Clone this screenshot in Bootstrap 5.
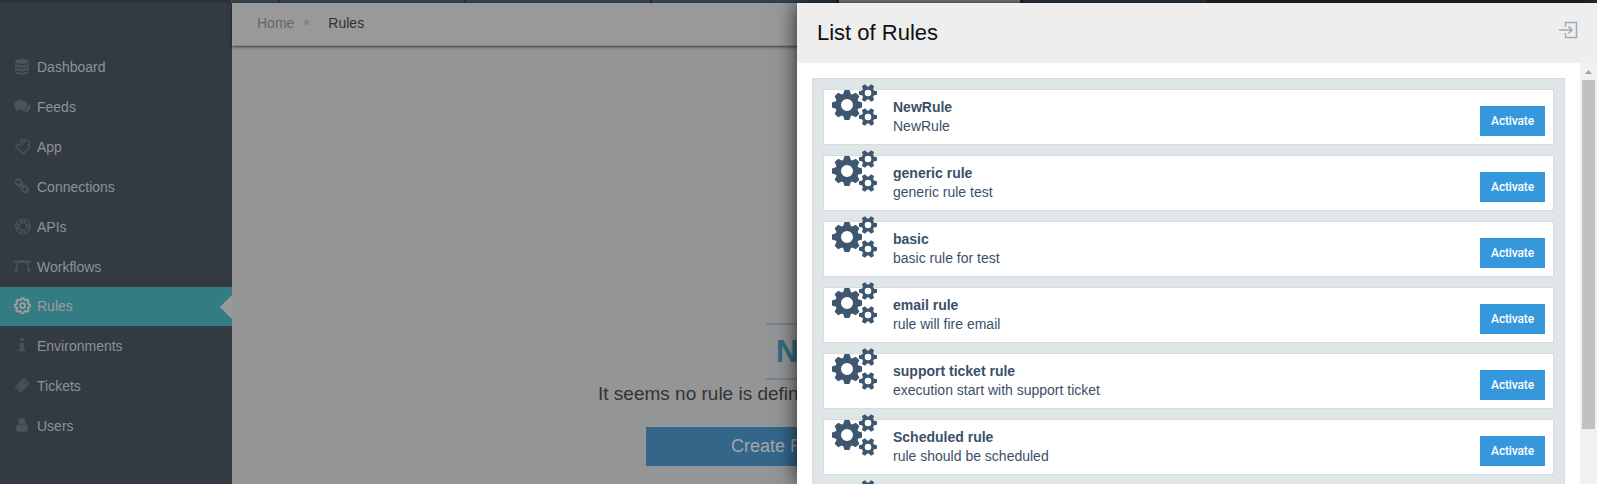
<!DOCTYPE html>
<html lang="en">
<head>
<meta charset="utf-8">
<title>Rules</title>
<link href="https://cdn.jsdelivr.net/npm/bootstrap@5.3.0/dist/css/bootstrap.min.css" rel="stylesheet">
<style>
html,body{height:100%;overflow:hidden}
body{font-family:"Liberation Sans",Arial,sans-serif;font-size:14px;line-height:20px;color:#3b5068}
.app-shell{height:484px;overflow:hidden;background:#949596}
.tab-strip{height:3px;background:#2c3037;padding-left:231px;gap:4px}
.tab-strip span{height:3px;width:182px;background:#34434f;border:solid #46535e;border-width:0 1px;flex:none}
.tab-strip span:first-child{width:46px}
.tab-strip .live{background:#999;border-color:#999;width:181px}
.side{width:232px;background:#343a42;padding-top:44px}
.side a{height:40px;padding:0 0 0 14px;color:#889499;text-decoration:none}
.side a svg{width:17px;height:17px;margin:-2px 6px 0 0;color:#4b525d;flex:none}
.side a.current{height:39px;padding-bottom:1px;background:#347c83;color:#9c9a9a;position:relative}
.side a.current svg{color:#a3a09f}
.side a.current::after{content:"";position:absolute;right:0;top:8px;border:12px solid transparent;border-left:0;border-right-color:#999}
.crumbs{height:43px;background:#999;border-bottom:1px solid #858585;box-shadow:0 1px 3px rgba(0,0,0,.6);padding:0 0 3px 25px;color:#666}
.crumbs i{width:5px;height:5px;border-radius:50%;background:#858585;margin:0 19px 0 10px}
.crumbs b{font-weight:400;color:#303030}
.empty-note{width:366px;margin:277px 0 0 366px}
.empty-note h1{font-size:31px;font-weight:700;line-height:53px;height:57px;margin:0 0 0 168px;border:solid #7a8389;border-width:2px 0;color:#356980;padding:0 10px;width:166px;white-space:nowrap}
.empty-note p{font-size:19px;line-height:24px;margin:2px 0 0;color:#333;white-space:nowrap}
.create-btn{width:266px;height:39px;background:#34668a;color:#a3a7aa;font-size:18px;border-radius:0;border:0;padding:0;margin:21px 0 0 48px}
.drawer{position:absolute;left:797px;top:3px;right:0;bottom:0;background:#fff;box-shadow:0 0 20px rgba(0,0,0,.78)}
.drawer-head{height:60px;background:#eee;padding:0 19px 1px 20px}
.drawer-head h2{font-size:22px;line-height:26px;margin:1px 0 0;color:#111;font-weight:400}
.drawer-head svg{width:19px;height:18px;margin-bottom:6px}
.rules-box{margin:15px 15px 0;border:1px solid #d9dcdc;background:#dee6e8;padding:10px 10px 0;height:440px}
.rule{height:56px;margin-bottom:10px;background:#fff;border:1px solid #d9dcdc;padding:0 8px}
.rule>svg{width:46px;height:42px;margin-top:-6px;flex:none;color:#3e576f}
.rule .txt{margin:8px 0 0 15px;line-height:19px}
.rule .btn{width:65px;height:30px;margin-top:16px;padding:0;background:#3598dc;color:#fff;border:0;border-radius:0;font:500 12px Roboto,sans-serif;letter-spacing:-.15px}
.scroller{width:17px;background:#f1f1f1;flex:none;padding:0 2px}
.scroller svg{width:13px;height:17px;display:block}
.scroller .thumb{height:349px;background:#c1c1c1}
</style>
</head>
<body>
<svg width="0" height="0" class="position-absolute">
<defs>
<path id="tooth" d="M-4-10.500-2.500-15h5L4-10.500z"/>
<g id="teeth4"><use href="#tooth"/><use href="#tooth" transform="rotate(90)"/><use href="#tooth" transform="rotate(180)"/><use href="#tooth" transform="rotate(270)"/></g>
<path id="nub" d="M-2.600-5.500-1.800-9h3.600L2.600-5.500z"/>
<g id="small-cog"><circle r="4.900" fill="none" stroke="currentColor" stroke-width="3.200"/><use href="#nub" transform="rotate(30)"/><use href="#nub" transform="rotate(90)"/><use href="#nub" transform="rotate(150)"/><use href="#nub" transform="rotate(210)"/><use href="#nub" transform="rotate(270)"/><use href="#nub" transform="rotate(330)"/></g>
</defs>
<symbol id="cogs" viewBox="0 0 46 42">
<g fill="currentColor"><g transform="translate(15 21)"><circle r="8.800" fill="none" stroke="currentColor" stroke-width="5.600"/><use href="#teeth4"/><use href="#teeth4" transform="rotate(45)"/></g>
<use href="#small-cog" transform="translate(36 9)"/><use href="#small-cog" transform="translate(36 33)"/></g>
</symbol>
</svg>
<div class="app-shell d-flex flex-column">
 <div class="tab-strip d-flex"><span></span><span></span><span></span><span></span><span class="live"></span><span></span></div>
 <div class="d-flex flex-grow-1">
  <nav class="side d-flex flex-column flex-shrink-0">
   <a href="#" class="d-flex align-items-center"><svg viewBox="0 0 17 17" fill="currentColor"><path d="M1 3C1 .2 15 .2 15 3v1c0 2.500-14 2.500-14 0zM1 5.700c3 1.800 11 1.800 14 0V8c-1 2.200-13 2.200-14 0zM1 9.600c3 1.800 11 1.800 14 0v2c-1 2.200-13 2.200-14 0zM1 13.300c3 1.800 11 1.800 14 0v1.500c-1 2.400-13 2.400-14 0z"/></svg>Dashboard</a>
   <a href="#" class="d-flex align-items-center"><svg viewBox="0 0 17 17" fill="currentColor"><path d="M6.500 2C2.800 2 0 4.200 0 7c0 1.800 1 3 2.500 4-.2 1-.6 1.500-1.200 2.200 1.500 0 2.700-.6 3.500-1.400 5 .6 8.500-1.800 8.500-4.900C13.300 4.200 10.300 2 6.500 2zM14.300 5c.4 4.200-3 7.300-7.800 7.600 1.500 1 3.500 1.300 5.300 1 .8.800 2 1.400 3.500 1.400-.6-.7-1-1.200-1.200-2.200C17.300 10.800 17.500 7 14.300 5z"/></svg>Feeds</a>
   <a href="#" class="d-flex align-items-center"><svg viewBox="0 0 17 17" fill="none" stroke="currentColor" stroke-width="1.300"><path d="M1.500 8.500 4 6C5 8.500 8.800 8 8.500 5.300 8.300 4 7.400 4.200 6.200 3.300L8 1.500 10.500 3.800C10 .5 13.500.2 13.800 3c3-.2 3 3.300 0 3.800l2.300 2.300L9 16z"/></svg>App</a>
   <a href="#" class="d-flex align-items-center"><svg viewBox="0 0 17 17" fill="none" stroke="currentColor" stroke-width="1.900"><rect x="1.500" y="2" width="6.500" height="5" rx="2" transform="rotate(45 4.750 4.500)"/><rect x="7.500" y="8.500" width="6.500" height="5" rx="2" transform="rotate(45 10.750 11)"/><path d="m5.500 5.500 4.500 4.500"/></svg>Connections</a>
   <a href="#" class="d-flex align-items-center"><svg viewBox="0 0 17 17" fill="none" stroke="currentColor" stroke-width="1.300"><circle cx="9" cy="8.500" r="7.300"/><circle cx="9" cy="8.500" r="4"/><path d="M7.500 1v3.800M10.500 1v3.800M7.500 12.200V16M10.500 12.200V16M1.500 7h3.800M1.500 10h3.800M12.700 7h3.800M12.700 10h3.800"/></svg>APIs</a>
   <a href="#" class="d-flex align-items-center"><svg viewBox="0 0 17 17" fill="none" stroke="currentColor" stroke-width="1.300"><path d="M1 3.500h15M2.500 11C2.500 6 5 3.500 8.500 3.500S14.500 6 14.500 11"/><g fill="currentColor" stroke="none"><path d="M1 10.500h3v3H1zM13 10.500h3v3h-3zM7 2h3v3H7zM.5 2.500h2v2h-2zM15 2.500h2v2h-2z"/></g></svg>Workflows</a>
   <a href="#" class="current d-flex align-items-center"><svg viewBox="0 0 17 17" fill="none" stroke="currentColor" stroke-width="1.700" stroke-linejoin="round"><path d="M7.300 1h2.400l.5 2 1.200.5 1.800-1.100 1.700 1.700L13.800 6l.5 1.200 2 .4v2.200l-2 .5-.5 1.200 1.100 1.800-1.700 1.700-1.800-1.100-1.200.5-.5 2H7.300l-.5-2-1.200-.5-1.800 1.100-1.700-1.700 1.100-1.800-.5-1.200-2-.5V7.600l2-.4L3.200 6 2.100 4.100l1.700-1.700 1.800 1.100L6.800 3z"/><circle cx="8.500" cy="8.600" r="2.500"/></svg>Rules</a>
   <a href="#" class="d-flex align-items-center"><svg viewBox="0 0 17 17" fill="currentColor"><path d="M6.500 1h3.300v3H6.500zM5.500 6h4.300v6H11v2.300H5V12h1.300V8h-.8z"/></svg>Environments</a>
   <a href="#" class="d-flex align-items-center"><svg viewBox="0 0 17 17" fill="none" stroke="currentColor" stroke-width="1.600"><path d="M1.500 10.500 10 2l1.300 1.300c0 1.500 1 2.400 2.400 2.300L15 6.700 6.500 15l-1.300-1.200c.1-1.400-1-2.400-2.400-2.300z"/><path fill="currentColor" d="m5 10 4.500-4.500 2 2L7 12z"/></svg>Tickets</a>
   <a href="#" class="d-flex align-items-center"><svg viewBox="0 0 17 17" fill="currentColor"><circle cx="8" cy="4.500" r="3.500"/><path d="M4.800 7.200c2 1.800 4.400 1.800 6.400 0 2 .3 2.800 2.300 2.800 4.800 0 1.700-.8 2.700-2 2.700H4c-1.200 0-2-1-2-2.700 0-2.500.8-4.500 2.800-4.800z"/></svg>Users</a>
  </nav>
  <main class="flex-grow-1">
   <div class="crumbs d-flex align-items-center"><span>Home</span><i></i><b>Rules</b></div>
   <div class="empty-note">
    <h1>No Rule</h1>
    <p>It seems no rule is defined yet.</p>
    <button class="btn create-btn">Create Rule</button>
   </div>
  </main>
 </div>
</div>
<section class="drawer d-flex flex-column">
 <header class="drawer-head d-flex align-items-center justify-content-between flex-shrink-0">
  <h2>List of Rules</h2>
  <svg viewBox="0 0 19 18" fill="none" stroke="#9aabb9" stroke-width="1.500"><path d="M6.500 6V1.500h11v15h-11V12M0 9h13M9.500 5.500 13 9l-3.500 3.500"/></svg>
 </header>
 <div class="d-flex flex-grow-1 overflow-hidden">
  <div class="flex-grow-1">
   <div class="rules-box">
    <div class="rule d-flex align-items-start"><svg><use href="#cogs"/></svg><div class="txt flex-grow-1"><strong>NewRule</strong><br>NewRule</div><button class="btn">Activate</button></div>
    <div class="rule d-flex align-items-start"><svg><use href="#cogs"/></svg><div class="txt flex-grow-1"><strong>generic rule</strong><br>generic rule test</div><button class="btn">Activate</button></div>
    <div class="rule d-flex align-items-start"><svg><use href="#cogs"/></svg><div class="txt flex-grow-1"><strong>basic</strong><br>basic rule for test</div><button class="btn">Activate</button></div>
    <div class="rule d-flex align-items-start"><svg><use href="#cogs"/></svg><div class="txt flex-grow-1"><strong>email rule</strong><br>rule will fire email</div><button class="btn">Activate</button></div>
    <div class="rule d-flex align-items-start"><svg><use href="#cogs"/></svg><div class="txt flex-grow-1"><strong>support ticket rule</strong><br>execution start with support ticket</div><button class="btn">Activate</button></div>
    <div class="rule d-flex align-items-start"><svg><use href="#cogs"/></svg><div class="txt flex-grow-1"><strong>Scheduled rule</strong><br>rule should be scheduled</div><button class="btn">Activate</button></div>
    <div class="rule d-flex align-items-start"><svg><use href="#cogs"/></svg></div>
   </div>
  </div>
  <div class="scroller"><svg viewBox="0 0 13 17"><path d="M3 11 6.500 7l3.500 4z" fill="#a3a3a3"/></svg><div class="thumb"></div></div>
 </div>
</section>
<script src="https://cdn.jsdelivr.net/npm/bootstrap@5.3.0/dist/js/bootstrap.bundle.min.js"></script>
</body>
</html>
